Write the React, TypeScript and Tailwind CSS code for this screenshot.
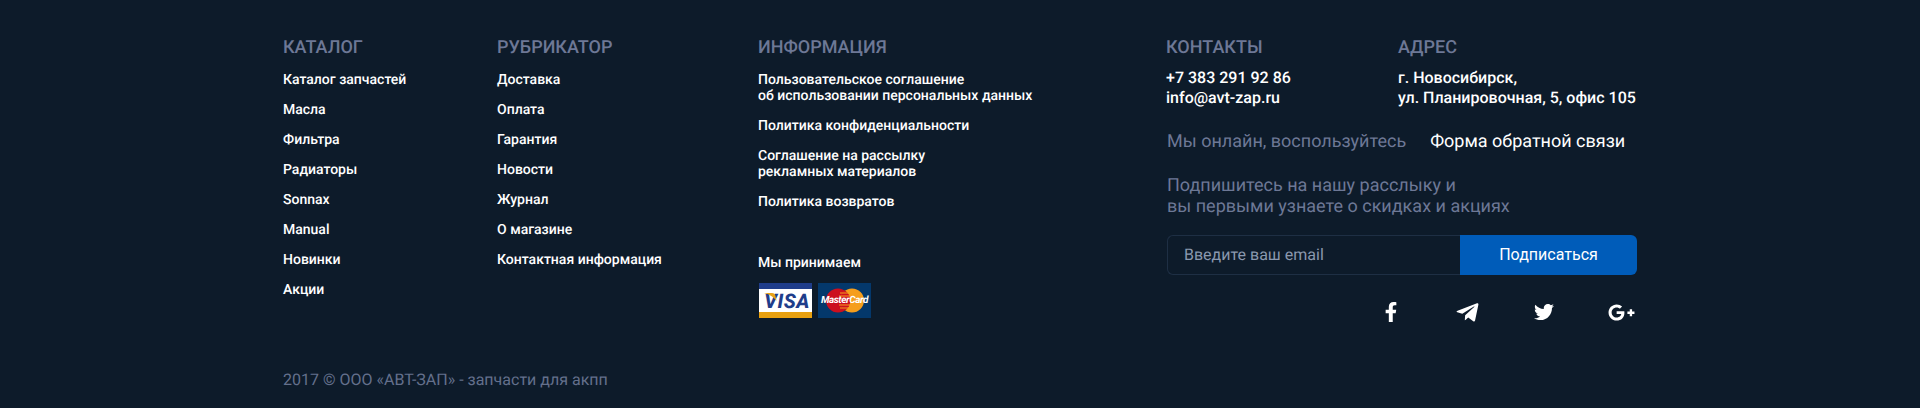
import { FaFacebookF, FaTelegramPlane, FaTwitter, FaGooglePlusG } from "react-icons/fa";

const catalog = ["Каталог запчастей", "Масла", "Фильтра", "Радиаторы", "Sonnax", "Manual", "Новинки", "Акции"];
const rubricator = ["Доставка", "Оплата", "Гарантия", "Новости", "Журнал", "О магазине", "Контактная информация"];

function Heading({ children }: { children: string }) {
  return <h3 className="text-[18px] leading-[24px] font-medium text-[#6d7896]">{children}</h3>;
}

function LinkColumn({ title, links, width }: { title: string; links: string[]; width: string }) {
  return (
    <div className={width}>
      <Heading>{title}</Heading>
      <ul className="mt-[10px] flex flex-col gap-[10px]">
        {links.map((link) => (
          <li key={link} className="text-[14px] leading-[20px] font-[480] text-white">{link}</li>
        ))}
      </ul>
    </div>
  );
}

function VisaCard() {
  return (
    <div className="flex h-[35px] w-[53px] flex-col">
      <div className="h-[6px] bg-[#1f3d8a]" />
      <div className="relative flex flex-1 items-center justify-center overflow-hidden bg-white">
        <svg className="absolute top-[4px] left-[5px]" width="14" height="10" viewBox="0 0 14 10">
          <path d="M0 0h8c2 0 3 1 3.500 3l1 5C10 4 5 1 0 0z" fill="#e8a317" />
        </svg>
        <span className="pl-[3px] text-[20px] leading-none font-extrabold tracking-[0.5px] text-[#1f3d8a] italic">VISA</span>
      </div>
      <div className="h-[6px] bg-[#e8a00f]" />
    </div>
  );
}

function MasterCard() {
  return (
    <div className="relative flex h-[35px] w-[53px] items-center justify-center bg-[#04386b]">
      <svg width="40" height="25" viewBox="0 0 40 25">
        <circle cx="13" cy="12.500" r="12" fill="#cc0f1e" />
        <circle cx="27" cy="12.500" r="12" fill="#f59e1c" />
        <path d="M20 2.500a12 12 0 0 1 0 20a12 12 0 0 1 0-20z" fill="#cc0f1e" />
        <path d="M15 5h10M14 8h12M14 17h12M15 20h10" stroke="#f59e1c" strokeWidth="1.200" />
      </svg>
      <span className="absolute text-[10px] leading-none font-bold tracking-[-0.4px] text-white italic">MasterCard</span>
    </div>
  );
}

export default function App() {
  return (
    <footer className="h-[408px] w-full bg-[#0d1b2a] font-['Roboto',sans-serif] [text-rendering:geometricPrecision]">
      <div className="flex pt-[36px] pl-[283px]">
        <LinkColumn title="КАТАЛОГ" links={catalog} width="w-[214px]" />
        <LinkColumn title="РУБРИКАТОР" links={rubricator} width="w-[261px]" />

        <div className="w-[408px]">
          <Heading>ИНФОРМАЦИЯ</Heading>
          <div className="mt-[12px] flex flex-col gap-[14px] text-[14px] leading-[16px] font-[480] text-white">
            <p>Пользовательское соглашение<br />об использовании персональных данных</p>
            <p>Политика конфиденциальности</p>
            <p>Соглашение на рассылку<br />рекламных материалов</p>
            <p>Политика возвратов</p>
          </div>
          <p className="mt-[45px] text-[14px] leading-[16px] font-[480] text-white">Мы принимаем</p>
          <div className="mt-[12px] ml-[1px] flex gap-[6px]">
            <VisaCard />
            <MasterCard />
          </div>
        </div>

        <div className="w-[471px]">
          <div className="flex">
            <div className="w-[232px]">
              <Heading>КОНТАКТЫ</Heading>
              <p className="mt-[8px] text-[16px] leading-[20px] font-medium text-white">+7 383 291 92 86<br />info@avt-zap.ru</p>
            </div>
            <div>
              <Heading>АДРЕС</Heading>
              <p className="mt-[8px] text-[16px] leading-[20px] font-medium text-white">г. Новосибирск,<br />ул. Планировочная, 5, офис 105</p>
            </div>
          </div>
          <div className="mt-[22px] flex gap-[24px] pl-[1px] text-[18px] leading-[24px]">
            <span className="text-[#6d7896]">Мы онлайн, воспользуйтесь</span>
            <span className="text-white">Форма обратной связи</span>
          </div>
          <p className="mt-[21px] pl-[1px] text-[18px] leading-[21px] text-[#6d7896]">Подпишитесь на нашу расслыку и<br />вы первыми узнаете о скидках и акциях</p>
          <div className="mt-[18px] ml-[1px] flex h-[40px]">
            <div className="flex flex-1 items-center rounded-l-[6px] border border-r-0 border-[#1e2f44] pl-[16px] text-[16px] text-[#8a98ae]">Введите ваш email</div>
            <button className="w-[177px] rounded-r-[6px] bg-[#005cb9] text-[16px] text-white">Подписаться</button>
          </div>
          <div className="mt-[23px] flex h-[28px] items-center justify-end gap-[47px] pr-[1px] text-white">
            <span className="flex w-[30px] justify-center pl-[2px]"><FaFacebookF size={20} /></span>
            <span className="flex w-[30px] justify-center"><FaTelegramPlane size={25} /></span>
            <span className="flex w-[30px] justify-center"><FaTwitter size={20} /></span>
            <span className="flex w-[30px] justify-center"><FaGooglePlusG size={27} /></span>
          </div>
        </div>
      </div>
      <p className="pt-[44px] pl-[283px] text-[16px] leading-[20px] text-[#64708c]">2017 © ООО «АВТ-ЗАП» - запчасти для акпп</p>
    </footer>
  );
}
